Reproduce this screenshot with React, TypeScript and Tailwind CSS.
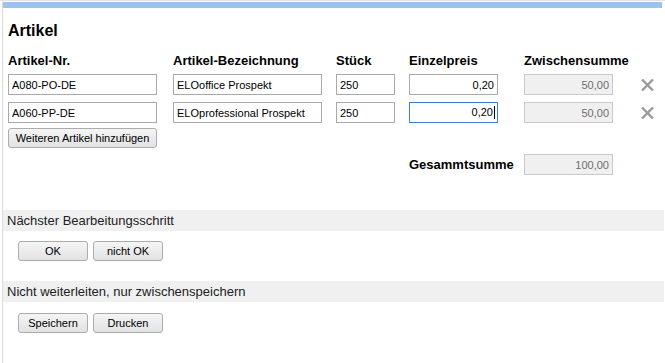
import React from "react";

const COLS = "grid grid-cols-[165px_163px_73px_115px_117px_auto] items-center";

function Field({
  value,
  width,
  right,
  disabled,
}: {
  value: string;
  width: string;
  right?: boolean;
  disabled?: boolean;
}) {
  return (
    <input
      readOnly
      value={value}
      className={
        "h-[21px] border px-[3px] text-[11px] outline-none " +
        width +
        (right ? " text-right" : "") +
        (disabled
          ? " border-[#c9c9c9] bg-[#f0f0f0] text-[#6d6d6d]"
          : " border-[#a9a9a9] bg-white text-black")
      }
    />
  );
}

function FocusedField({ value }: { value: string }) {
  return (
    <div className="flex h-[21px] w-[89px] items-center justify-end border border-[#3c7dd6] pr-[2px] text-[11px] text-black">
      <span>{value}</span>
      <span className="ml-px h-[13px] w-px bg-black" />
    </div>
  );
}

function RemoveIcon() {
  return (
    <svg width="13" height="12" viewBox="0 0 13 12" className="block">
      <path d="M1 0.5 L12 11.5 M12 0.5 L1 11.5" stroke="#9a9a9a" strokeWidth="2.4" />
    </svg>
  );
}

function Btn({ label, width }: { label: string; width: string }) {
  return (
    <button
      className={
        "h-[20px] rounded-[3px] border border-[#acacac] bg-linear-to-b from-[#f5f5f5] to-[#e2e2e2] text-[11px] text-black " +
        width
      }
    >
      {label}
    </button>
  );
}

function SectionBar({ title }: { title: string }) {
  return (
    <div className="h-[21px] bg-[#f0f0f0] pl-[4px] text-[13px] leading-[21px] text-[#222]">
      {title}
    </div>
  );
}

const rows = [
  { nr: "A080-PO-DE", name: "ELOoffice Prospekt", qty: "250", price: "0,20", sum: "50,00" },
  { nr: "A060-PP-DE", name: "ELOprofessional Prospekt", qty: "250", price: "0,20", sum: "50,00" },
];

export default function App() {
  return (
    <div className="h-[363px] overflow-hidden bg-white font-['Liberation_Sans',Arial,sans-serif] text-black">
      <div className="h-px bg-[#e4e4e4]" />
      <div className="flex h-[362px]">
        <div className="w-[2px]" />
        <div className="w-px bg-[#dcdcdc]" />
        <div className="flex-1 pr-px">
          <div className="mr-[2px] mt-px h-[6px] bg-[#9cc3f0]" />

          <div className="pl-[5px]">
            <h1 className="mt-[14px] text-[16px] font-bold leading-[18px]">Artikel</h1>

            <div className={COLS + " mt-[13px] text-[13px] font-bold leading-[15px]"}>
              <div>Artikel-Nr.</div>
              <div>Artikel-Bezeichnung</div>
              <div>Stück</div>
              <div>Einzelpreis</div>
              <div>Zwischensumme</div>
              <div />
            </div>

            {rows.map((r, i) => (
              <div key={r.nr} className={COLS + (i === 0 ? " mt-[6px]" : " mt-[7px]")}>
                <Field value={r.nr} width="w-[149px]" />
                <Field value={r.name} width="w-[149px]" />
                <Field value={r.qty} width="w-[59px]" />
                {i === 1 ? (
                  <FocusedField value={r.price} />
                ) : (
                  <Field value={r.price} width="w-[89px]" right />
                )}
                <Field value={r.sum} width="w-[89px]" right disabled />
                <RemoveIcon />
              </div>
            ))}

            <div className="mt-[5px] flex">
              <Btn label="Weiteren Artikel hinzufügen" width="w-[149px]" />
            </div>

            <div className={COLS + " mt-[6px]"}>
              <div />
              <div />
              <div />
              <div className="text-[13px] font-bold">Gesammtsumme</div>
              <Field value="100,00" width="w-[89px]" right disabled />
              <div />
            </div>
          </div>

          <div className="mt-[35px]">
            <SectionBar title="Nächster Bearbeitungsschritt" />
          </div>
          <div className="mt-[10px] flex gap-[5px] pl-[15px]">
            <Btn label="OK" width="w-[70px]" />
            <Btn label="nicht OK" width="w-[70px]" />
          </div>

          <div className="mt-[20px]">
            <SectionBar title="Nicht weiterleiten, nur zwischenspeichern" />
          </div>
          <div className="mt-[11px] flex gap-[5px] pl-[15px]">
            <Btn label="Speichern" width="w-[70px]" />
            <Btn label="Drucken" width="w-[70px]" />
          </div>
        </div>
      </div>
    </div>
  );
}
